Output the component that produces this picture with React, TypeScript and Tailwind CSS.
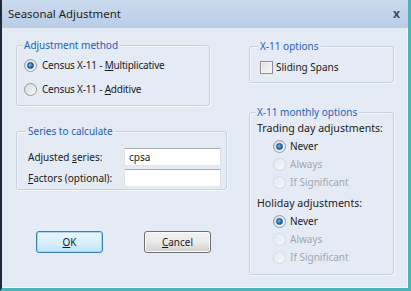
import React from "react";

function Radio({ checked, disabled }: { checked?: boolean; disabled?: boolean }) {
  if (disabled) {
    return (
      <span className="inline-block w-[13px] h-[13px] rounded-full border border-[#d4dbe3] bg-gradient-to-br from-[#e6ebf0] to-[#f4f7fa] shrink-0" />
    );
  }
  return (
    <span className="relative inline-flex items-center justify-center w-[13px] h-[13px] rounded-full border border-[#8e9aa6] bg-gradient-to-br from-[#d6dbe0] to-[#fafbfc] shrink-0">
      {checked && (
        <span className="w-[7px] h-[7px] rounded-full bg-[radial-gradient(circle_at_40%_40%,#7ec4ef_0%,#2f7fc0_45%,#0f3e6e_100%)] border border-[#1c4f7e]" />
      )}
    </span>
  );
}

function Group({
  title,
  className,
  children,
}: {
  title: string;
  className?: string;
  children: React.ReactNode;
}) {
  return (
    <div
      className={`border border-[#c7d0da] rounded-[3px] shadow-[inset_1px_1px_0_#f6f9fc,1px_1px_0_#f6f9fc] ${className ?? ""}`}
    >
      <div className="-mt-[8px] h-[14px] leading-[14px]">
        <span className="-ml-[2px] px-[2px] bg-[#e4ebf4] text-[#2461b8]">{title}</span>
      </div>
      {children}
    </div>
  );
}

function Button({ children, focused }: { children: React.ReactNode; focused?: boolean }) {
  return (
    <button
      className={`w-[67px] h-[22px] rounded-[3px] border leading-none text-[#1a1a1a] ${
        focused
          ? "border-[#3c7fb1] shadow-[inset_0_0_0_1px_#a6d6f3] bg-gradient-to-b from-[#eaf6fd] via-[#d9f0fc] to-[#bee6fd]"
          : "border-[#707070] shadow-[inset_0_0_0_1px_#fbfbfb] bg-gradient-to-b from-[#f2f2f2] via-[#ebebeb] to-[#d0d0d0]"
      }`}
    >
      {children}
    </button>
  );
}

function Option({ label, checked, disabled }: { label: string; checked?: boolean; disabled?: boolean }) {
  return (
    <label className={`h-[18px] flex items-center gap-[4px] ${disabled ? "text-[#a3a8ae]" : ""}`}>
      <Radio checked={checked} disabled={disabled} />
      <span>{label}</span>
    </label>
  );
}

export default function App() {
  return (
    <div className="w-[411px] h-[291px] overflow-hidden flex flex-col bg-[#e4ebf4] border-l-2 border-l-[#1d2b3c] border-r-[3px] border-r-[#4ab4b6] border-b-[3px] border-b-[#4ab4b6] font-['Noto_Sans',sans-serif] text-[10px] text-[#1a1a1a]">
      {/* title bar */}
      <div className="h-[28px] shrink-0 flex items-center justify-between pl-[6px] pr-[8px] bg-gradient-to-b from-[#cbdbee] to-[#b9cde6]">
        <span className="text-[11.4px] text-[#1e1e1e]">Seasonal Adjustment</span>
        <span className="text-[12px] font-bold text-[#3a4a63] leading-none">x</span>
      </div>

      {/* body */}
      <div className="flex flex-1 pt-[10px] pl-[14px] border-r border-b border-[#f3f6fa]">
        {/* left column */}
        <div className="w-[211px] flex flex-col">
          <Group title="Adjustment method" className="mt-[7px] w-[194px] pl-[7px] pb-[7px]">
            <div className="flex flex-col gap-[6px] mt-[4px]">
              <label className="h-[18px] flex items-center gap-[5px]">
                <Radio checked />
                <span className="tracking-[-0.2px]">
                  Census X-11 - <span className="underline">M</span>ultiplicative
                </span>
              </label>
              <label className="h-[18px] flex items-center gap-[5px]">
                <Radio />
                <span className="tracking-[-0.2px]">
                  Census X-11 - <span className="underline">A</span>dditive
                </span>
              </label>
            </div>
          </Group>

          <Group title="Series to calculate" className="mt-[25px] w-[211px] pl-[11px] pr-[5px] pb-[2px]">
            <div className="flex flex-col gap-[3px] mt-[10px]">
              <div className="flex items-center h-[18px]">
                <span className="w-[96px]">
                  Adjusted <span className="underline">s</span>eries:
                </span>
                <div className="flex-1 h-[18px] bg-white border border-[#abadb3] border-l-[#e2e3ea] border-r-[#dbdfe6] border-b-[#e3e9ef] px-[4px] flex items-center">
                  cpsa
                </div>
              </div>
              <div className="flex items-center h-[18px]">
                <span className="w-[96px]">
                  <span className="underline">F</span>actors (optional):
                </span>
                <div className="flex-1 h-[18px] bg-white border border-[#abadb3] border-l-[#e2e3ea] border-r-[#dbdfe6] border-b-[#e3e9ef]" />
              </div>
            </div>
          </Group>

          <div className="flex gap-[41px] mt-[41px] pl-[20px]">
            <Button focused>
              <span className="underline">O</span>K
            </Button>
            <Button>
              <span className="underline">C</span>ancel
            </Button>
          </div>
        </div>

        {/* right column */}
        <div className="ml-[22px] w-[145px] flex flex-col">
          <Group title="X-11 options" className="mt-[8px] pl-[10px] pb-[6px]">
            <label className="h-[18px] flex items-center gap-[3px] mt-[5px]">
              <span className="w-[13px] h-[13px] border border-[#8f8f8f] bg-gradient-to-br from-[#dcdcdc] to-[#fbfbfb] shadow-[inset_0_0_0_1px_#f4f4f4] shrink-0" />
              <span>Sliding Spans</span>
            </label>
          </Group>

          <Group title="X-11 monthly options" className="mt-[29px] pl-[7px] pb-[8px]">
            <div className="flex flex-col mt-[1px]">
              <span className="h-[17px] flex items-center text-[10.6px]">Trading day adjustments:</span>
              <div className="flex flex-col pl-[16px]">
                <Option label="Never" checked />
                <Option label="Always" disabled />
                <Option label="If Significant" disabled />
              </div>
              <span className="h-[17px] mt-[4px] flex items-center text-[10.6px]">Holiday adjustments:</span>
              <div className="flex flex-col pl-[16px]">
                <Option label="Never" checked />
                <Option label="Always" disabled />
                <Option label="If Significant" disabled />
              </div>
            </div>
          </Group>
        </div>
      </div>
    </div>
  );
}
